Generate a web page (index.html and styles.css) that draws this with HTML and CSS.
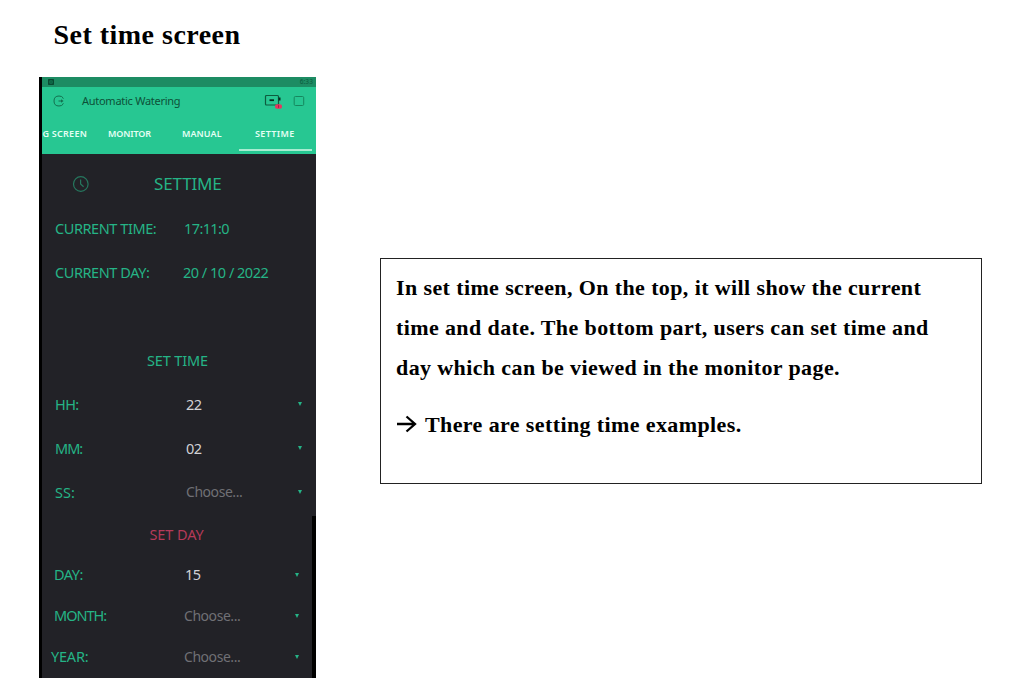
FILE: index.html
```html
<!DOCTYPE html>
<html lang="en">
<head>
<meta charset="utf-8">
<title>Set time screen</title>
<link rel="stylesheet" href="styles.css">
</head>
<body>
<h1 class="title"><span>Set time screen</span></h1>
<main class="content">
  <section class="phone">
    <div class="status">
      <svg class="status-icon" width="6" height="6" viewBox="0 0 6 6"><rect x=".8" y=".8" width="4.4" height="4.4" fill="#168b5f" stroke="#063f2b" stroke-width="1.3"/><path d="M2 3h2" stroke="#063f2b"/></svg>
      <span class="clock">6:33</span>
    </div>
    <header class="bar">
      <svg class="exit" width="12" height="12" viewBox="0 0 12 12" fill="none" stroke="#136f4e" stroke-width="1"><path d="M10.2 3.6V3Q9 1 6 1 1 1 1 6t5 5q3 0 4.2-2v-.6M5.5 6H8"/><path d="M8 4.3 10.6 6 8 7.7z" fill="#136f4e" stroke="none"/></svg>
      <span class="app-name">Automatic Watering</span>
      <svg class="device" width="19" height="16" viewBox="0 0 19 16"><rect x="1.5" y="2.5" width="13" height="9.5" rx="1" fill="none" stroke="#0d5c3e" stroke-width="1.2"/><path d="M5.5 7.2h4.5" stroke="#052d1e" stroke-width="1.8"/><path d="M14.5 4.5h2v3h-2z" fill="#052d1e"/><rect x="11" y="11.3" width="7" height="4.5" rx="2" fill="#e8365f"/><path d="M14.5 12.2v2.6" stroke="#9c2348"/></svg>
      <svg class="stop" width="12" height="12" viewBox="0 0 12 12"><rect x="1.2" y="1.5" width="9.5" height="9" rx="1.2" fill="none" stroke="#16875e" stroke-width="1"/></svg>
    </header>
    <nav class="tabs">
      <span class="tab first">G SCREEN</span>
      <span class="tab monitor">MONITOR</span>
      <span class="tab manual">MANUAL</span>
      <span class="tab active">SETTIME</span>
    </nav>
    <div class="upper">
      <div class="row heading"><svg width="18" height="18" viewBox="0 0 18 18" fill="none" stroke="#26775e" stroke-width="1.2"><circle cx="8.8" cy="9" r="7.3"/><path d="M8.6 4.5V9l3 2.8"/></svg><span class="settime">SETTIME</span></div>
      <div class="row"><span class="label current-time">CURRENT TIME:</span><span class="time">17:11:0</span></div>
      <div class="row"><span class="label current-day">CURRENT DAY:</span><span class="date">20 / 10 / 2022</span></div>
      <div class="row"></div>
      <div class="row"><span class="set-time">SET TIME</span></div>
      <div class="row"><span class="label">HH:</span><span class="value">22</span><i class="caret"></i></div>
      <div class="row"><span class="label mm">MM:</span><span class="value">02</span><i class="caret"></i></div>
      <div class="row"><span class="label ss">SS:</span><span class="value choose">Choose...</span><i class="caret"></i></div>
    </div>
    <div class="lower">
      <div class="row"><span class="set-day">SET DAY</span></div>
      <div class="row"><span class="label">DAY:</span><span class="value fifteen">15</span><i class="caret"></i></div>
      <div class="row"><span class="label month">MONTH:</span><span class="value choose">Choose...</span><i class="caret"></i></div>
      <div class="row year"><span class="label">YEAR:</span><span class="value choose">Choose...</span><i class="caret"></i></div>
    </div>
  </section>
  <section class="note">
    <p class="paragraph"><span>In set time screen, On the top, it will show the current</span><br><span>time and date. The bottom part, users can set time and</span><br><span>day which can be viewed in the monitor page.</span></p>
    <p class="example"><svg width="21" height="20" viewBox="0 0 21 20" fill="none" stroke="#000" stroke-width="2.3"><path d="M1 9h18M10.5 1.5 19 9l-8.5 7.5"/></svg><span>There are setting time examples.</span></p>
  </section>
</main>
</body>
</html>
```
FILE: styles.css
```css
* { box-sizing: border-box; }
body { margin: 0; width: 1032px; height: 685px; overflow: hidden; background: #fff; color: #000; font-family: "Liberation Serif", serif; }
svg { display: block; flex: none; }
span { white-space: nowrap; }
.title { margin: 0; height: 77px; padding: 19px 0 0 53.5px; font-size: 28px; line-height: 32px; letter-spacing: .48px; }
.content { display: flex; align-items: flex-start; padding-left: 39px; }
.phone { flex: none; width: 277px; height: 601px; overflow: hidden; background: #222227; border-left: 3px solid #000; color: #25b486; font-family: "Noto Sans", sans-serif; }
.status { height: 10px; display: flex; align-items: center; justify-content: space-between; padding: 0 3px 0 6px; background: #1d8c63; }
.clock { color: #0b5a3d; font-size: 6.5px; line-height: 10px; letter-spacing: .1px; }
.bar { height: 28px; display: flex; align-items: center; background: #27c792; padding-left: 11px; }
.app-name { width: 199px; padding: 0 0 1px 17px; color: #0d5138; font-size: 11px; letter-spacing: -.27px; }
.stop { margin-left: 10px; }
.tabs { height: 39px; display: flex; background: #27c792; color: #e4fff4; font-size: 9px; font-weight: 600; line-height: 37px; }
.tab { height: 36px; flex: none; }
.first { width: 66px; padding-left: .5px; letter-spacing: .25px; }
.monitor { width: 74px; letter-spacing: -.1px; }
.manual { width: 57px; letter-spacing: .1px; }
.active { width: 73px; padding-left: 16px; border-bottom: 2px solid #a8ecd1; letter-spacing: .35px; }
.upper { height: 362px; padding-top: 8px; }
.row { height: 44px; display: flex; align-items: center; padding: 0 0 1px 13px; font-size: 14.5px; line-height: 20px; letter-spacing: -.6px; font-weight: 400; }
.heading { padding-left: 30px; font-size: 17px; letter-spacing: -.15px; }
.settime { margin-left: 64px; }
.label { width: 131px; flex: none; }
.current-time, .current-day { letter-spacing: -.42px; }
.mm { letter-spacing: -1px; }
.ss { letter-spacing: 0; }
.time { margin-left: -2px; }
.date { margin-left: -3px; letter-spacing: -.5px; }
.set-time { margin-left: 92px; letter-spacing: -.15px; }
.value { width: 112px; flex: none; color: #d2d2d6; }
.choose { padding-top: 1px; color: #707075; font-size: 14px; letter-spacing: -.45px; }
.caret { margin-top: 1px; border: 2.5px solid transparent; border-top: 4px solid #25b486; border-bottom: 0; }
.lower { height: 162px; border-right: 4px solid #000; }
.lower .row { height: 41px; padding-left: 12px; }
.lower .row:first-child { height: 38px; padding-bottom: 3px; }
.lower .label { width: 130px; letter-spacing: -.45px; }
.lower .month { letter-spacing: -1px; }
.lower .caret { margin-left: -1px; }
.set-day { margin-left: 95.5px; color: #b53a59; letter-spacing: -.1px; }
.lower .fifteen { padding-left: 1px; }
.lower .year { padding-left: 9px; }
.lower .year .label { width: 133px; letter-spacing: -.2px; }
.note { flex: none; width: 602px; height: 226px; margin: 181px 0 0 64px; padding: 9px 15px; border: 1px solid #222; font-size: 22px; font-weight: 700; letter-spacing: .39px; }
.paragraph { margin: 0; line-height: 40px; }
.example { display: flex; align-items: center; gap: 8px; margin: 17px 0 0; height: 40px; line-height: 40px; }
```
